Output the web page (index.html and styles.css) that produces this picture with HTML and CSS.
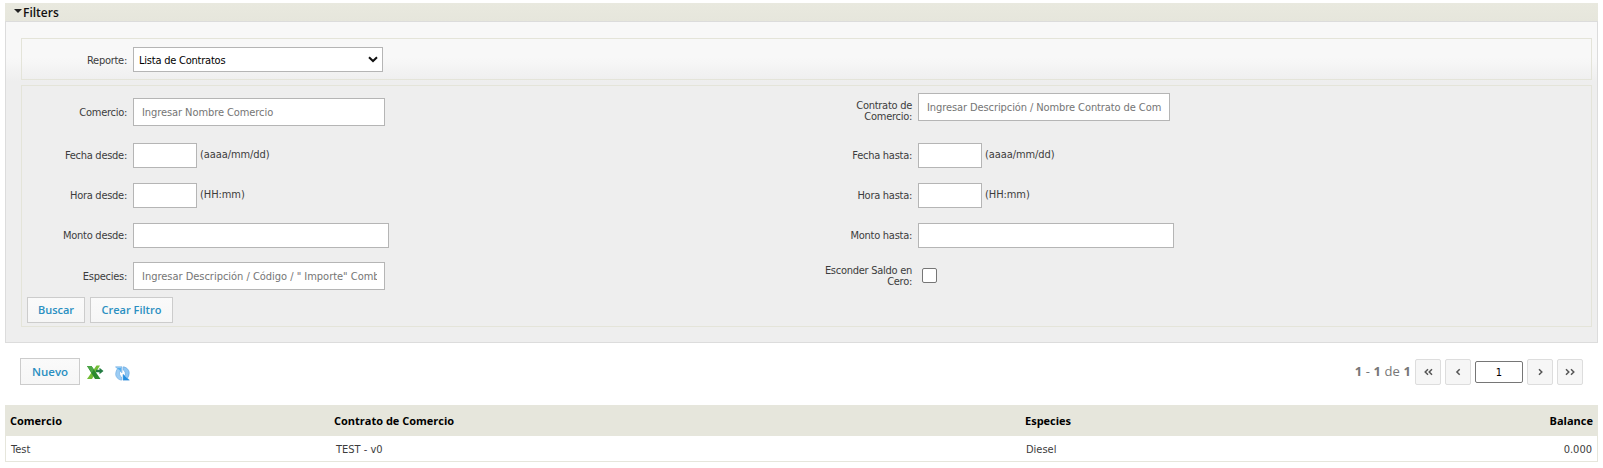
FILE: index.html
```html
<!DOCTYPE html>
<html lang="es">
<head>
<meta charset="utf-8">
<title>Lista de Contratos</title>
<link rel="stylesheet" href="styles.css">
</head>
<body>
<section class="panel">
  <header class="panel-header"><span class="caret"></span><span class="panel-title">Filters</span></header>
  <div class="panel-body">
    <div class="group report">
      <label class="label">Reporte:</label>
      <div class="select"><span>Lista de Contratos</span>
        <svg class="chevron" width="10" height="7" viewBox="0 0 10 7"><path d="M1 1.2 5 5 9 1.2" fill="none" stroke="#111" stroke-width="2"/></svg>
      </div>
    </div>
    <div class="group criteria">
      <div class="row row-first">
        <div class="field"><label class="label">Comercio:</label><div class="input suggest"><span>Ingresar Nombre Comercio</span></div></div>
        <div class="field raised"><label class="label two">Contrato de<br>Comercio:</label><div class="input suggest"><span class="tight">Ingresar Descripción / Nombre Contrato de Com</span></div></div>
      </div>
      <div class="row">
        <div class="field"><label class="label">Fecha desde:</label><div class="input short"></div><span class="hint">(aaaa/mm/dd)</span></div>
        <div class="field"><label class="label">Fecha hasta:</label><div class="input short"></div><span class="hint">(aaaa/mm/dd)</span></div>
      </div>
      <div class="row">
        <div class="field"><label class="label">Hora desde:</label><div class="input short"></div><span class="hint">(HH:mm)</span></div>
        <div class="field"><label class="label">Hora hasta:</label><div class="input short"></div><span class="hint">(HH:mm)</span></div>
      </div>
      <div class="row">
        <div class="field"><label class="label">Monto desde:</label><div class="input wide"></div></div>
        <div class="field"><label class="label">Monto hasta:</label><div class="input wide"></div></div>
      </div>
      <div class="row row-last">
        <div class="field"><label class="label">Especies:</label><div class="input suggest"><span class="loose">Ingresar Descripción / Código / " Importe" Comb</span></div></div>
        <div class="field"><label class="label two">Esconder Saldo en<br>Cero:</label><div class="check"></div></div>
      </div>
      <div class="actions"><div class="button buscar">Buscar</div><div class="button crear">Crear Filtro</div></div>
    </div>
  </div>
</section>
<div class="toolbar">
  <div class="button nuevo">Nuevo</div>
  <svg class="excel" width="17" height="15" viewBox="0 0 17 15">
    <path d="M9.500 .5H13L5 14H0z" fill="#72bc35"/>
    <path d="M0 1h4.500l9 13H8z" fill="#2c8a30"/>
    <path d="M0 1h4.500l2.300 3.300-2 3.500z" fill="#4ba646"/>
    <path d="M9 4.800h3.500V2.800l4 3.200-4 3.200v-2H9z" fill="#237c43"/>
  </svg>
  <svg class="refresh" width="15" height="15" viewBox="0 0 15 15">
    <path d="M.5 .8H7v6L5.200 5.200C4 7 4.300 9.500 6.500 11v3.200C2.800 13.600.4 10.600.7 7.600.8 5.800 1.500 4 2.400 2.800z" fill="#9dcdf4" stroke="#6aaae2" stroke-width=".6"/>
    <path d="M14.300 14.200H8V8.300L9.700 9.800C10.900 8 10.500 5.500 8.300 4V.8C12 1.400 14.500 4.400 14.200 7.400 14.100 9.200 13.400 11 12.500 12.200z" fill="#8fc6f3" stroke="#5a9fdd" stroke-width=".6"/>
    <path d="M8.200 8.500 14 14H8.200z" fill="#218de0"/>
    <path d="M2 2h4v3.600z" fill="#55b0ee"/>
  </svg>
  <div class="pager">
    <span class="count"><b>1</b> - <b>1</b> de <b>1</b></span>
    <div class="page-button"><svg width="9" height="8" viewBox="0 0 9 8"><path d="M4 1.200 1.200 4l2.800 2.800M8 1.200 5.200 4l2.800 2.800"/></svg></div>
    <div class="page-button"><svg width="9" height="8" viewBox="0 0 9 8"><path d="M5.700 1.200 2.900 4l2.800 2.800"/></svg></div>
    <div class="page-input">1</div>
    <div class="page-button"><svg width="9" height="8" viewBox="0 0 9 8"><path d="M3 1.200 5.800 4 3 6.800"/></svg></div>
    <div class="page-button"><svg width="10" height="8" viewBox="0 0 10 8"><path d="M1 1.200 3.800 4 1 6.800M6 1.200 8.800 4 6 6.800"/></svg></div>
  </div>
</div>
<div class="table">
  <div class="table-head"><span>Comercio</span><span>Contrato de Comercio</span><span>Especies</span><span class="num">Balance</span></div>
  <div class="table-row"><span>Test</span><span class="contract">TEST - v0</span><span>Diesel</span><span class="num">0.000</span></div>
</div>
</body>
</html>
```
FILE: styles.css
```css
* { box-sizing: border-box; }
body {
  margin: 0;
  padding: 3px 5px 0;
  background: #fff;
  color: #3c3c3c;
  font: 11px/11px "DejaVu Sans Condensed", "DejaVu Sans", sans-serif;
  font-stretch: condensed;
}
.panel-header {
  display: flex;
  height: 18px;
  background: linear-gradient(#e9e9df, #e6e6dc);
}
.caret {
  width: 0;
  height: 0;
  margin: 6px 2px 0 9px;
  border: 4px solid transparent;
  border-top-color: #222;
  border-bottom: 0;
}
.panel-title {
  margin-left: -1px;
  color: #111;
  font: 600 12px/19px "Open Sans", sans-serif;
}
.panel-body {
  height: 322px;
  padding: 16px 5px 0 15px;
  border: 1px solid #dcdcdc;
  background: linear-gradient(#f8f8f8 0, #f8f8f8 36px, #eee 60px, #eee 100%);
}
.group { border: 1px solid #e4e4d9; }
.report {
  display: flex;
  align-items: center;
  height: 42px;
  margin-bottom: 5px;
}
.report .label { padding-top: 2px; }
.criteria {
  display: flex;
  flex-direction: column;
  height: 242px;
}
.label {
  width: 105px;
  margin-right: 6px;
  padding-top: 1px;
  flex: none;
  letter-spacing: -.27px;
  text-align: right;
  white-space: nowrap;
}
.label.two { padding-top: 0; }
.select {
  display: flex;
  align-items: center;
  justify-content: space-between;
  width: 250px;
  height: 25px;
  padding: 0 4px;
  border: 1px solid #b5b5b5;
  background: #fff;
  color: #000;
}
.select span {
  padding: 2px 0 0 1px;
  letter-spacing: -.22px;
}
.row {
  display: grid;
  grid-template-columns: 785px 1fr;
  height: 40px;
  flex: none;
}
.row-first { height: 49px; padding-top: 3px; }
.row-last { height: 41px; }
.field { display: flex; align-items: center; }
.raised { padding-bottom: 10px; }
.raised .label.two { padding-top: 7px; }
.input {
  height: 25px;
  border: 1px solid #b5b5b5;
  background: #fff;
}
.short { width: 64px; }
.wide { width: 256px; }
.suggest {
  width: 252px;
  height: 28px;
  padding: 0 7px 0 8px;
  line-height: 27px;
  color: #757575;
  letter-spacing: -.08px;
}
.suggest span {
  display: block;
  overflow: hidden;
  white-space: nowrap;
}
.suggest .tight { letter-spacing: -.09px; }
.suggest .loose { letter-spacing: -.02px; }
.hint {
  margin: -2px 0 0 3px;
  letter-spacing: -.08px;
}
.check {
  width: 15px;
  height: 15px;
  margin-left: 4px;
  border: 1px solid #767676;
  border-radius: 2px;
  background: #fff;
}
.actions { display: flex; gap: 5px; padding: 1px 0 0 5px; }
.button {
  height: 26px;
  border: 1px solid #ccc;
  background: linear-gradient(#fafafa, #f6f6f6);
  color: #2a8fc1;
  font: 600 11px/24px "Open Sans", sans-serif;
  text-align: center;
  white-space: nowrap;
}
.buscar { width: 58px; }
.crear { width: 83px; }
.toolbar {
  display: flex;
  height: 62px;
  padding: 15px 15px 0;
}
.nuevo { width: 60px; height: 27px; line-height: 26px; font-size: 11.500px; }
.excel { margin: 7px 0 0 7px; }
.refresh { margin: 8px 0 0 11px; }
.pager {
  display: flex;
  align-items: center;
  gap: 4px;
  height: 26px;
  margin: 1px 0 0 auto;
}
.count {
  color: #777;
  font: 13px/16px "Open Sans", sans-serif;
  letter-spacing: .1px;
  padding-bottom: 3px;
}
.page-button {
  display: flex;
  align-items: center;
  justify-content: center;
  width: 26px;
  height: 26px;
  border: 1px solid #ddd;
  border-radius: 2px;
  background: #f6f6f6;
}
.page-button path { fill: none; stroke: #555; stroke-width: 1.5; }
.page-input {
  width: 48px;
  height: 22px;
  border: 1px solid #767676;
  border-radius: 2px;
  color: #000;
  line-height: 22px;
  text-align: center;
}
.table-head, .table-row {
  display: grid;
  grid-template-columns: 324px 691px 400px 1fr;
  padding: 0 5px;
}
.table-head {
  height: 31px;
  background: #e6e6dc;
  color: #000;
  font: 700 11px/32px "Open Sans", sans-serif;
}
.table-row {
  height: 26px;
  border: 1px solid #e6e6dc;
  border-top: 0;
  line-height: 27px;
}
.contract { padding-left: 1px; }
.num { text-align: right; }
```
